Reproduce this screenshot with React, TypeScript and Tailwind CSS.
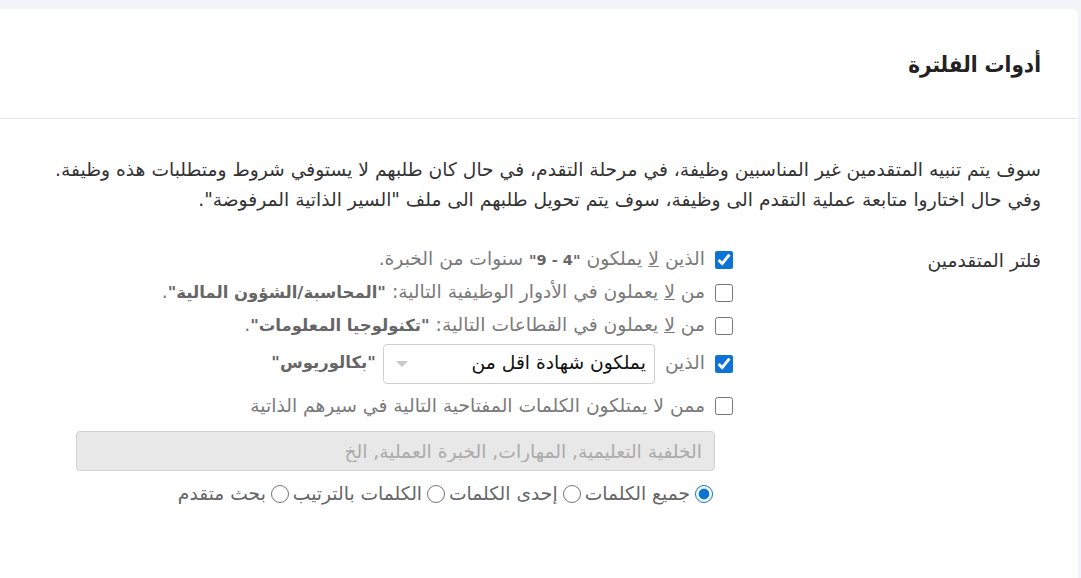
import { useState } from "react";

const font = { fontFamily: '"DejaVu Sans", "Noto Sans", sans-serif' };

function Check({ checked, onChange }: { checked: boolean; onChange: () => void }) {
  return (
    <input
      type="checkbox"
      checked={checked}
      onChange={onChange}
      className="w-[18px] h-[18px] m-0 shrink-0 accent-[#0b74d6]"
    />
  );
}

export default function App() {
  const [checks, setChecks] = useState([true, false, false, true, false]);
  const [mode, setMode] = useState("all");

  const toggle = (i: number) => setChecks((c) => c.map((v, j) => (j === i ? !v : v)));

  const modes = [
    { value: "all", label: "جميع الكلمات" },
    { value: "any", label: "إحدى الكلمات" },
    { value: "order", label: "الكلمات بالترتيب" },
    { value: "advanced", label: "بحث متقدم" },
  ];

  return (
    <div dir="rtl" style={font} className="min-h-[578px] bg-[#f0f3f8] pt-[9px] pr-[3px]">
      <div className="bg-white rounded-tr-md min-h-[569px]">
        {/* Header */}
        <div className="h-[110px] flex items-center px-[37px] border-b border-[#e6e6e6]">
          <h2 className="text-[20px] font-bold text-[#222] tracking-[-1px] scale-y-110">أدوات الفلترة</h2>
        </div>

        {/* Body */}
        <div className="px-[37px] pt-[36px]">
          <p className="text-[18.7px] leading-[30px] text-[#333]">
            سوف يتم تنبيه المتقدمين غير المناسبين وظيفة، في مرحلة التقدم، في حال كان طلبهم لا يستوفي شروط ومتطلبات هذه وظيفة.
            <br />
            وفي حال اختاروا متابعة عملية التقدم الى وظيفة، سوف يتم تحويل طلبهم الى ملف "السير الذاتية المرفوضة".
          </p>

          <div className="flex mt-[28px]">
            <div className="w-[308px] shrink-0 pt-[4px] text-[18.7px] text-[#333]">فلتر المتقدمين</div>

            <div className="flex flex-col text-[18.7px] text-[#7a7a7a]">
              <label className="flex items-center gap-[10px] h-[33px]">
                <Check checked={checks[0]} onChange={() => toggle(0)} />
                <span>
                  الذين <u>لا</u> يملكون <b className="text-[#666] text-[14.5px]">"4 - 9"</b> سنوات من الخبرة.
                </span>
              </label>
              <label className="flex items-center gap-[10px] h-[33px]">
                <Check checked={checks[1]} onChange={() => toggle(1)} />
                <span>
                  من <u>لا</u> يعملون في الأدوار الوظيفية التالية: <b className="text-[#666] text-[16.5px]">"المحاسبة/الشؤون المالية"</b>.
                </span>
              </label>
              <label className="flex items-center gap-[10px] h-[33px]">
                <Check checked={checks[2]} onChange={() => toggle(2)} />
                <span>
                  من <u>لا</u> يعملون في القطاعات التالية: <b className="text-[#666] text-[16.5px] tracking-[-0.5px]">"تكنولوجيا المعلومات"</b>.
                </span>
              </label>
              <div className="flex items-center gap-[10px] h-[41px] mt-[1px]">
                <Check checked={checks[3]} onChange={() => toggle(3)} />
                <span>الذين</span>
                <div className="w-[272px] h-[40px] flex items-center justify-between border border-[#cfcfcf] rounded-[4px] pr-[8px] pl-[12px] text-[#111]">
                  <span>يملكون شهادة اقل من</span>
                  <span className="w-0 h-0 border-l-[6px] border-r-[6px] border-t-[6px] border-l-transparent border-r-transparent border-t-[#c8c8c8]" />
                </div>
                <b className="text-[#666] text-[16.5px] mr-[-3px]">"بكالوريوس"</b>
              </div>
              <label className="flex items-center gap-[10px] h-[42px] mt-[1px]">
                <Check checked={checks[4]} onChange={() => toggle(4)} />
                <span>ممن لا يمتلكون الكلمات المفتاحية التالية في سيرهم الذاتية</span>
              </label>

              <input
                type="text"
                disabled
                placeholder="الخلفية التعليمية, المهارات, الخبرة العملية, الخ"
                className="mr-[18px] mt-[4px] w-[639px] h-[40px] px-[12px] bg-[#e8e8e8] border border-[#d2d2d2] rounded-[4px] text-[18.7px] placeholder:text-[#ababab]"
                style={font}
              />

              <div className="flex items-center mr-[20px] mt-[11px] h-[24px] text-[#666]">
                {modes.map((m) => (
                  <label key={m.value} className="flex items-center gap-[5px] ml-[4px]">
                    <input
                      type="radio"
                      name="mode"
                      checked={mode === m.value}
                      onChange={() => setMode(m.value)}
                      className="w-[18px] h-[18px] m-0 accent-[#0b74d6]"
                    />
                    <span>{m.label}</span>
                  </label>
                ))}
              </div>
            </div>
          </div>
        </div>
      </div>
    </div>
  );
}
